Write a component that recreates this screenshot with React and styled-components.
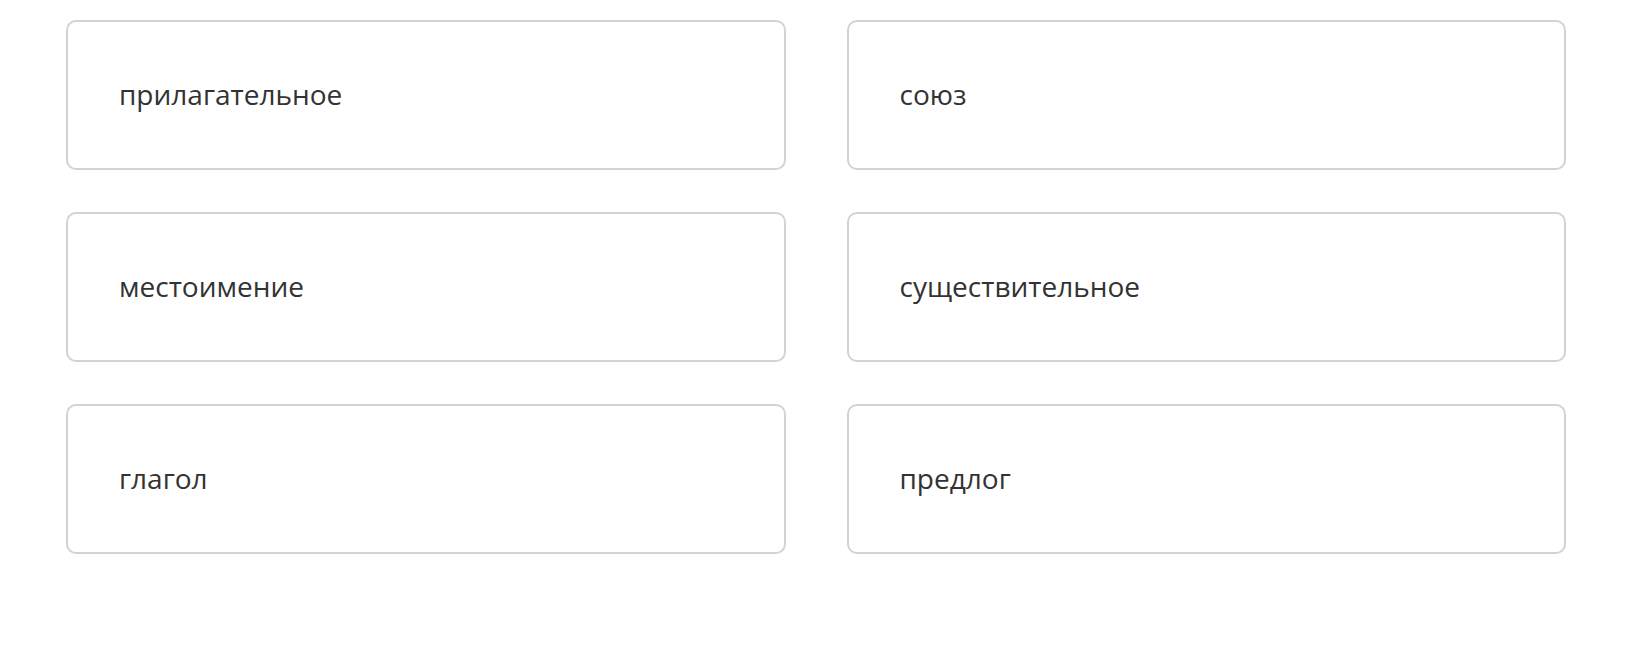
import React from "react";
import styled, { createGlobalStyle } from "styled-components";

const GlobalStyle = createGlobalStyle`
  body {
    margin: 0;
    background: #fff;
    font-family: "Open Sans", "Noto Sans", sans-serif;
  }
`;

const Grid = styled.div`
  display: grid;
  grid-template-columns: 1fr 1fr;
  column-gap: 61px;
  row-gap: 42px;
  width: 1500px;
  padding: 20px 0 0 66px;
`;

const Card = styled.div`
  box-sizing: border-box;
  height: 150px;
  display: flex;
  align-items: center;
  padding: 0 0 2px 51px;
  border: 2px solid #d3d3d3;
  border-radius: 10px;
  font-size: 28px;
  color: #333;
`;

const words = [
  "прилагательное",
  "союз",
  "местоимение",
  "существительное",
  "глагол",
  "предлог",
];

export default function App() {
  return (
    <>
      <GlobalStyle />
      <Grid>
        {words.map((w) => (
          <Card key={w}>{w}</Card>
        ))}
      </Grid>
    </>
  );
}
